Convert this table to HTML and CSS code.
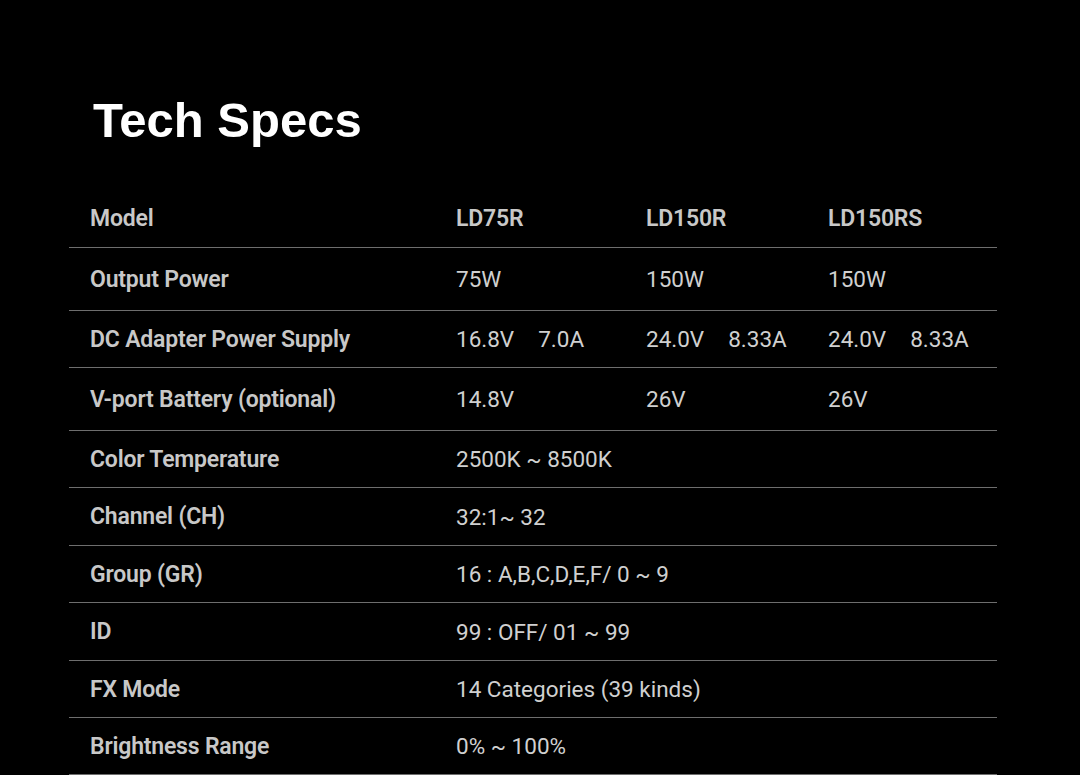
FILE: index.html
```html
<!DOCTYPE html>
<html lang="en">
<head>
<meta charset="utf-8">
<title>Tech Specs</title>
<link rel="stylesheet" href="styles.css">
</head>
<body>
<section class="specs">
  <h1 class="title">Tech Specs</h1>
  <div class="table">
    <div class="row row-head">
      <div class="cell label">Model</div>
      <div class="cell head">LD75R</div>
      <div class="cell head">LD150R</div>
      <div class="cell head">LD150RS</div>
    </div>
    <div class="row row-tall">
      <div class="cell label">Output Power</div>
      <div class="cell">75W</div>
      <div class="cell">150W</div>
      <div class="cell">150W</div>
    </div>
    <div class="row">
      <div class="cell label">DC Adapter Power Supply</div>
      <div class="cell"><span>16.8V</span><span class="pair">7.0A</span></div>
      <div class="cell"><span>24.0V</span><span class="pair">8.33A</span></div>
      <div class="cell"><span>24.0V</span><span class="pair">8.33A</span></div>
    </div>
    <div class="row row-tall">
      <div class="cell label">V-port Battery (optional)</div>
      <div class="cell">14.8V</div>
      <div class="cell">26V</div>
      <div class="cell">26V</div>
    </div>
    <div class="row">
      <div class="cell label">Color Temperature</div>
      <div class="cell span">2500K ~ 8500K</div>
    </div>
    <div class="row row-mid">
      <div class="cell label">Channel (CH)</div>
      <div class="cell span">32:1~ 32</div>
    </div>
    <div class="row">
      <div class="cell label">Group (GR)</div>
      <div class="cell span">16 : A,B,C,D,E,F/ 0 ~ 9</div>
    </div>
    <div class="row row-mid">
      <div class="cell label">ID</div>
      <div class="cell span">99 : OFF/ 01 ~ 99</div>
    </div>
    <div class="row">
      <div class="cell label">FX Mode</div>
      <div class="cell span">14 Categories (39 kinds)</div>
    </div>
    <div class="row">
      <div class="cell label">Brightness Range</div>
      <div class="cell span">0% ~ 100%</div>
    </div>
  </div>
</section>
</body>
</html>
```

FILE: styles.css
```css
* {
  box-sizing: border-box;
}

html, body {
  margin: 0;
  padding: 0;
  background: #000;
}

body {
  width: 1080px;
  height: 775px;
  overflow: hidden;
  font-family: Roboto, "Liberation Sans", sans-serif;
}

.specs {
  padding: 93px 0 0 69px;
}

.title {
  margin: 0 0 40px 24px;
  font-family: "Liberation Sans", Arial, sans-serif;
  font-weight: 700;
  font-size: 49px;
  line-height: 55px;
  color: #fff;
}

.table {
  width: 928px;
}

.row {
  display: grid;
  grid-template-columns: 366px 190px 182px 190px;
  align-items: center;
  height: 57px;
  border-bottom: 1px solid #6e6e6e;
}

.row-head {
  height: 60px;
}

.row-head .cell {
  padding-top: 2px;
}

.row-tall {
  height: 63px;
}

.row-mid {
  height: 58px;
}

.cell {
  padding-left: 21px;
  font-size: 22.5px;
  color: #d0d0d0;
  white-space: nowrap;
}

.cell.span {
  grid-column: 2 / 5;
}

.label,
.head {
  font-size: 23px;
  font-weight: 600;
  letter-spacing: -0.2px;
  color: #c8c8c8;
}

.pair {
  margin-left: 24px;
}
```
